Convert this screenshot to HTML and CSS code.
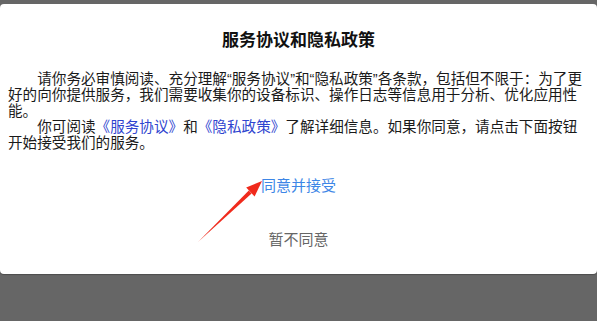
FILE: index.html
```html
<!DOCTYPE html>
<html lang="zh-CN">
<head>
<meta charset="utf-8">
<link rel="stylesheet" href="styles.css">
</head>
<body>
<div class="dialog">
  <h1 class="title">服务协议和隐私政策</h1>
  <div class="content">
    <p class="para">请你务必审慎阅读、充分理解“服务协议”和“隐私政策”各条款，包括但不限于：为了更好的向你提供服务，我们需要收集你的设备标识、操作日志等信息用于分析、优化应用性能。</p>
    <p class="para">你可阅读<span class="link">《服务协议》</span>和<span class="link">《隐私政策》</span>了解详细信息。如果你同意，请点击下面按钮开始接受我们的服务。</p>
  </div>
  <div class="actions">
    <div class="btn btn-accept">同意并接受</div>
    <div class="btn btn-decline">暂不同意</div>
  </div>
  <svg class="arrow" width="80" height="80" viewBox="0 0 80 80">
    <polygon points="8,73 61.6,24.6 58.8,21.6" fill="#f02a1c"/>
    <polygon points="72,12 64.6,27.5 56.2,18.6" fill="#f02a1c"/>
  </svg>
</div>
</body>
</html>
```

FILE: styles.css
```css
html, body {
  margin: 0;
  padding: 0;
}
body {
  background: #666666;
  width: 597px;
  height: 321px;
  overflow: hidden;
  font-family: "Noto Sans CJK SC", "Noto Sans", sans-serif;
}
.dialog {
  position: relative;
  margin-top: 4px;
  height: 270px;
  background: #ffffff;
  border-radius: 4px;
  box-shadow: 0 1px 1px rgba(0,0,0,0.25);
  display: flex;
  flex-direction: column;
}
.title {
  margin: 0;
  padding-top: 22px;
  text-align: center;
  font-size: 17px;
  line-height: 26px;
  font-weight: bold;
  color: #111;
}
.content {
  padding: 19px 9px 0 8px;
}
.para {
  margin: 0;
  text-indent: 29.2px;
  font-family: "Liberation Sans", "Noto Sans CJK SC", sans-serif;
  font-size: 14.6px;
  line-height: 16px;
  color: #1a1a1a;
}
.link {
  color: #2f45cf;
}
.actions {
  display: flex;
  flex-direction: column;
  align-items: center;
  padding-top: 24px;
}
.btn {
  font-size: 15px;
  line-height: 20px;
}
.btn-accept {
  color: #3d86e6;
}
.btn-decline {
  margin-top: 34px;
  color: #666666;
}
.arrow {
  position: absolute;
  left: 190px;
  top: 165px;
}
```
